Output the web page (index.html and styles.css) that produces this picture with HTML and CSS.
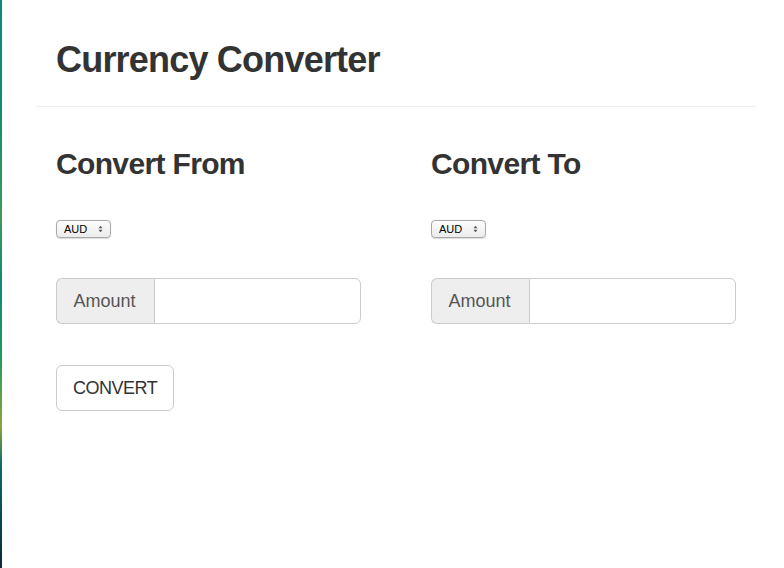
FILE: index.html
```html
<!DOCTYPE html>
<html lang="en">
<head>
<meta charset="utf-8">
<title>Currency Converter</title>
<link rel="stylesheet" href="styles.css">
</head>
<body>
<div class="desktop-edge"></div>
<div class="container">
  <header class="page-header">
    <h1 class="title">Currency Converter</h1>
  </header>
  <div class="columns">
    <section class="col">
      <h2 class="col-title">Convert From</h2>
      <div class="select"><span class="select-text">AUD</span><svg class="select-arrows" width="5" height="8" viewBox="0 0 5 8"><path d="M0.5 3.2 L2.5 0.8 L4.5 3.2 Z M0.5 4.8 L2.5 7.2 L4.5 4.8 Z" fill="#555"/></svg></div>
      <div class="input-group">
        <span class="addon">Amount</span>
        <input class="field" type="text">
      </div>
      <button class="btn" type="button">CONVERT</button>
    </section>
    <section class="col">
      <h2 class="col-title">Convert To</h2>
      <div class="select"><span class="select-text">AUD</span><svg class="select-arrows" width="5" height="8" viewBox="0 0 5 8"><path d="M0.5 3.2 L2.5 0.8 L4.5 3.2 Z M0.5 4.8 L2.5 7.2 L4.5 4.8 Z" fill="#555"/></svg></div>
      <div class="input-group">
        <span class="addon">Amount</span>
        <input class="field" type="text">
      </div>
    </section>
  </div>
</div>
</body>
</html>
```
FILE: styles.css
```css
* { box-sizing: border-box; }
html, body { margin: 0; padding: 0; height: 100%; }
body {
  background: #fff;
  font-family: "Liberation Sans", Arial, sans-serif;
  color: #333;
  display: flex;
  overflow: hidden;
}
.desktop-edge {
  flex: 0 0 2px;
  height: 568px;
  background: linear-gradient(180deg, #0b8a7a 0%, #118f6e 20%, #3d9a5a 38%, #0f8a78 50%, #1a9a60 62%, #8ba53a 75%, #0d6b66 82%, #0a4d55 90%, #0b2b33 100%);
}
.container {
  margin-left: 34px;
  width: 720px;
}
.page-header {
  padding: 40px 20px 0;
  border-bottom: 1px solid #eee;
  height: 107px;
}
.title {
  margin: 0;
  font-size: 36px;
  line-height: 39.6px;
  font-weight: 700;
  letter-spacing: -0.8px;
}
.columns {
  display: grid;
  grid-template-columns: 375px 345px;
  padding: 0 20px;
}
.col { display: flex; flex-direction: column; align-items: flex-start; }
.col-title {
  margin: 40px 0 0;
  font-size: 30px;
  line-height: 33px;
  font-weight: 700;
  letter-spacing: -0.65px;
}
.select {
  margin-top: 40px;
  width: 55px;
  height: 18px;
  border: 1px solid #a9a9a9;
  border-radius: 4px;
  background: linear-gradient(#fdfdfd, #ececec);
  display: flex;
  align-items: center;
  justify-content: space-between;
  padding: 0 7px 0 7px;
  color: #000;
  box-shadow: 0 0.5px 1px rgba(0,0,0,0.15);
}
.select-text { font-size: 11px; line-height: 16px; }
.select-arrows { display: block; }
.input-group {
  margin-top: 40px;
  display: flex;
  width: 305px;
  height: 46px;
}
.addon {
  display: flex;
  align-items: center;
  justify-content: center;
  width: 98px;
  padding-right: 2px;
  font-size: 18px;
  color: #555;
  background: #eee;
  border: 1px solid #ccc;
  border-right: 0;
  border-radius: 6px 0 0 6px;
}
.field {
  flex: 1;
  min-width: 0;
  height: 46px;
  border: 1px solid #ccc;
  border-radius: 0 6px 6px 0;
  font-size: 18px;
  padding: 10px 16px;
  font-family: inherit;
  outline: none;
}
.btn {
  margin-top: 41px;
  height: 46px;
  padding: 0 16px;
  font-family: inherit;
  font-size: 18px;
  letter-spacing: -0.5px;
  color: #333;
  background: #fff;
  border: 1px solid #ccc;
  border-radius: 6px;
}
```
